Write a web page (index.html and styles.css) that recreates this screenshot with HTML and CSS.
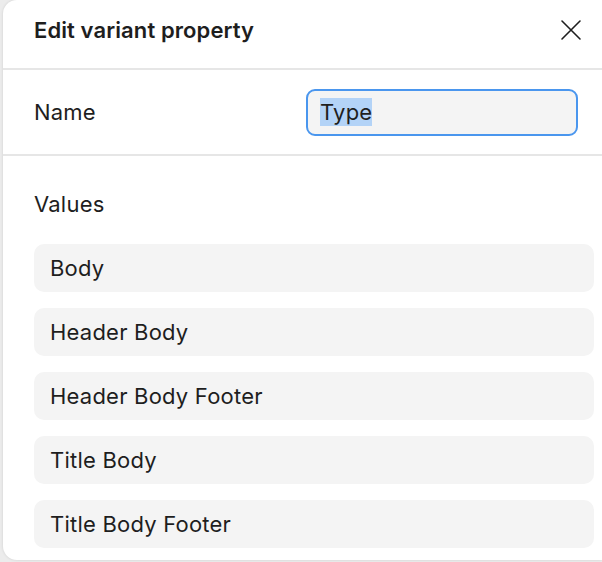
FILE: index.html
```html
<!DOCTYPE html>
<html>
<head>
<meta charset="utf-8">
<link rel="stylesheet" href="styles.css">
</head>
<body>
<div class="dialog">
  <div class="header">
    <div class="title">Edit variant property</div>
    <svg class="close" width="22" height="22" viewBox="0 0 22 22"><path d="M2 2L20 20M20 2L2 20" stroke="#1e1e1e" stroke-width="1.6" stroke-linecap="round"/></svg>
  </div>
  <div class="name-row">
    <div class="label">Name</div>
    <div class="input"><span class="sel">Type</span></div>
  </div>
  <div class="values">
    <div class="label values-label">Values</div>
    <div class="list">
      <div class="item">Body</div>
      <div class="item">Header Body</div>
      <div class="item">Header Body Footer</div>
      <div class="item">Title Body</div>
      <div class="item">Title Body Footer</div>
    </div>
  </div>
</div>
</body>
</html>
```
FILE: styles.css
```css
html, body {
  margin: 0;
  padding: 0;
}
body {
  background: #ececec;
  width: 602px;
  height: 562px;
  overflow: hidden;
  font-family: Inter, "Noto Sans", sans-serif;
  color: #1e1e1e;
}
.dialog {
  margin-left: 3px;
  width: 599px;
  height: 560px;
  background: #fff;
  border-radius: 14px 0 0 14px;
  box-shadow: 0 0 3px rgba(0,0,0,0.12);
  box-sizing: border-box;
}
.header {
  height: 70px;
  display: flex;
  align-items: center;
  justify-content: space-between;
  padding: 0 0 0 31px;
  box-sizing: border-box;
  border-bottom: 2px solid #e6e6e6;
}
.title {
  font-size: 22px;
  font-weight: 600;
  letter-spacing: 0.1px;
  margin-top: -9px;
}
.close {
  margin-right: 20px;
  margin-top: -9px;
}
.name-row {
  height: 86px;
  display: flex;
  align-items: center;
  justify-content: space-between;
  padding-left: 31px;
  padding-right: 24px;
  box-sizing: border-box;
  border-bottom: 2px solid #e6e6e6;
}
.label {
  font-size: 22px;
  letter-spacing: 0.22px;
}
.input {
  width: 272px;
  height: 47px;
  box-sizing: border-box;
  border: 2px solid #4a96ee;
  border-radius: 9px;
  background: #f4f4f4;
  display: flex;
  align-items: center;
  padding-left: 12px;
  font-size: 22px;
  letter-spacing: 0.22px;
}
.sel {
  background: #b3d3f7;
  line-height: 28px;
}
.values {
  padding: 36px 0 0 31px;
}
.values-label {
  line-height: 24px;
  margin-bottom: 28px;
}
.list {
  display: flex;
  flex-direction: column;
  gap: 16px;
  width: 560px;
}
.item {
  height: 48px;
  background: #f4f4f4;
  border-radius: 10px;
  display: flex;
  align-items: center;
  padding-left: 16px;
  font-size: 22px;
  letter-spacing: 0.22px;
}
```
